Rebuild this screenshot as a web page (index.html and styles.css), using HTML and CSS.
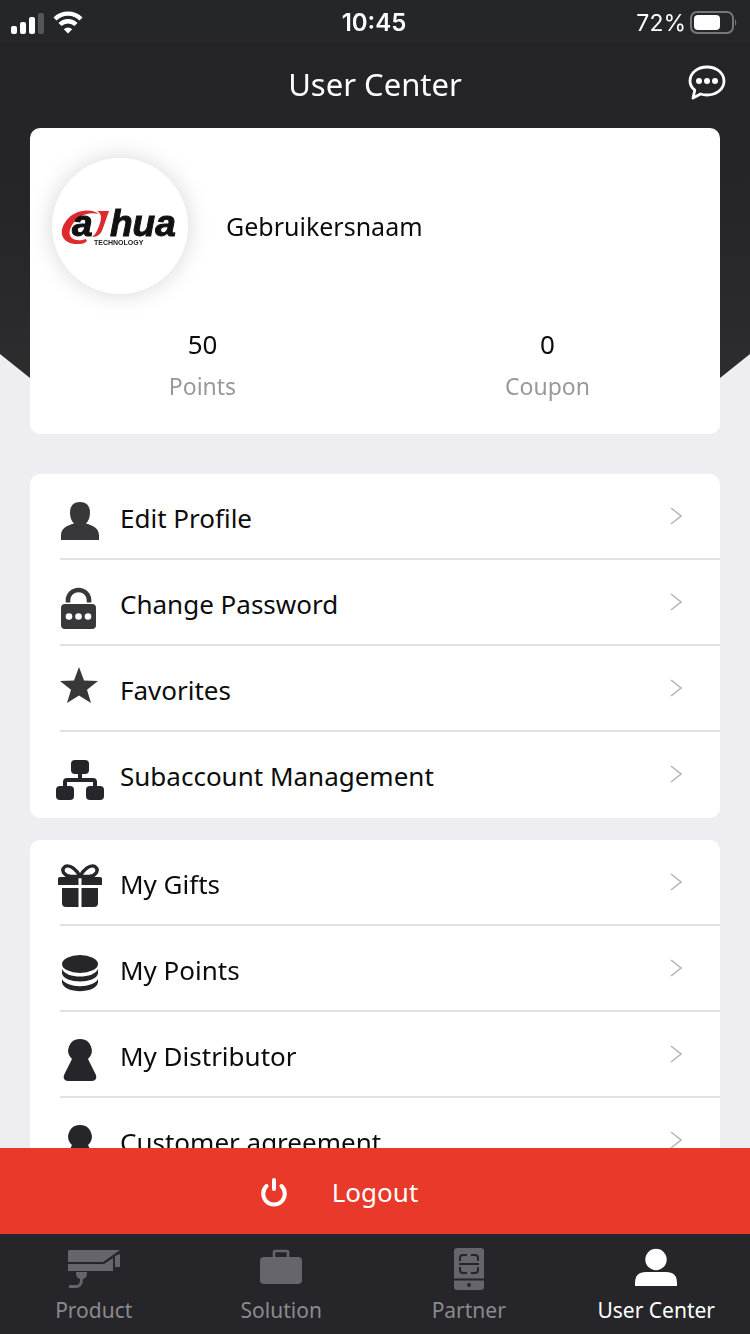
FILE: index.html
```html
<!DOCTYPE html>
<html lang="en">
<head>
<meta charset="utf-8">
<meta name="viewport" content="width=device-width, initial-scale=1">
<title>User Center</title>
<link rel="stylesheet" href="styles.css">
</head>
<body>
<svg class="defs" aria-hidden="true">
  <symbol id="chevron" viewBox="0 0 12 18"><path d="M1 1l10 8-10 8" fill="none" stroke="#b4b4b6" stroke-width="1.5"/></symbol>
  <symbol id="pawn" viewBox="0 0 48 48"><path d="M24 4a11.500 11.500 0 0 1 8 20l7.500 15c2 4 0 7-3.500 7H12c-3.500 0-5.500-3-3.500-7L16 24A11.500 11.500 0 0 1 24 4z"/></symbol>
</svg>
<div class="app">
  <main class="content">
    <svg class="backdrop" viewBox="0 0 750 434" preserveAspectRatio="none" aria-hidden="true">
      <defs><linearGradient id="dark" x1="0" y1="0" x2="0" y2="1"><stop offset="0" stop-color="#242428"/><stop offset=".5" stop-color="#262529"/><stop offset="1" stop-color="#2f2f2f"/></linearGradient></defs>
      <path fill="url(#dark)" d="M0 0H750V354L720 378Q640 430 375 430Q110 430 30 378L0 354Z"/>
    </svg>
    <div class="status">
      <div class="status-side">
        <svg width="34" height="24" viewBox="0 0 34 24" fill="#fff" aria-label="Signal"><rect x="1" y="15" width="6" height="8" rx="2"/><rect x="10" y="11" width="6" height="12" rx="2"/><rect x="19" y="6" width="6" height="17" rx="2"/><rect x="28" y="2" width="6" height="21" rx="2" fill="#56565a"/></svg>
        <svg width="30" height="24" viewBox="0 0 30 24" fill="none" stroke="#fff" stroke-width="4.400" aria-label="Wi-Fi"><path d="M2 8a18.500 18.500 0 0 1 26 0"/><path d="M7 13.500a11.500 11.500 0 0 1 16 0"/><path d="M15 22.500l-4.200-4.300a6 6 0 0 1 8.400 0z" fill="#fff" stroke="none"/></svg>
      </div>
      <time class="clock">10:45</time>
      <div class="status-side status-end">
        <span>72%</span>
        <svg width="48" height="24" viewBox="0 0 48 24" aria-label="Battery"><rect x="1" y="1" width="42" height="21" rx="6" fill="none" stroke="#77777a" stroke-width="2"/><rect x="4" y="4" width="26" height="15" rx="4" fill="#fff"/><path d="M45 8q2.500 3.500 0 7z" fill="#77777a"/></svg>
      </div>
    </div>
    <header class="header">
      <h1>User Center</h1>
      <button class="chat" aria-label="Messages">
        <svg width="38" height="36" viewBox="0 0 38 36"><path d="M19 2c9.600 0 17 6 17 14s-7.400 14-17 14c-2.300 0-4.500-.3-6.500-1L5 33l1.800-7.800C3.800 22.800 2 19.600 2 16 2 8 9.400 2 19 2z" fill="none" stroke="#fff" stroke-width="2.800" stroke-linejoin="round"/><g fill="#fff"><circle cx="11" cy="16" r="3"/><circle cx="19" cy="16" r="3"/><circle cx="27" cy="16" r="3"/></g></svg>
      </button>
    </header>
    <section class="card profile">
      <div class="identity">
        <div class="avatar">
          <svg width="118" height="44" viewBox="0 0 118 44" role="img" aria-label="Dahua Technology">
            <path d="M38 10C28 3 12 7 5 17c-9 12-3 24 13 23 4 0 6-1 8-3l-1-2c-12 4-20-2-15-12C15 12 27 7 38 10z" fill="#dc2a2e"/>
            <path d="M36 7h12l-6 17c-2 6-5 9-11 9 4-3 5-6 7-11 3-8 3-12-2-15z" fill="#dc2a2e"/>
            <text class="logo-name" x="11" y="32">a</text>
            <text class="logo-name" x="49" y="32">hua</text>
            <text class="logo-sub" x="33" y="41">TECHNOLOGY</text>
          </svg>
        </div>
        <p class="name">Gebruikersnaam</p>
      </div>
      <dl class="stats">
        <div><dd>50</dd><dt>Points</dt></div>
        <div><dd>0</dd><dt>Coupon</dt></div>
      </dl>
    </section>
    <nav class="card menu">
      <a class="row" href="#profile"><svg class="icon soft" viewBox="0 0 48 48"><path d="M24 5c6.500 0 10 4 10 10.500 0 5-1.500 8.500-4 11 7 2 13 4.500 13 12V43H5v-4.500c0-7.500 6-10 13-12-2.500-2.500-4-6-4-11C14 9 17.500 5 24 5z"/></svg><span>Edit Profile</span><svg class="chevron"><use href="#chevron"/></svg></a>
      <a class="row" href="#password"><svg class="icon soft" viewBox="0 0 48 48"><path d="M12 19.500V17a10.500 10 0 0 1 21 0v2.500" fill="none" stroke="#38383a" stroke-width="4.600"/><rect x="5" y="21" width="35" height="25" rx="4"/><g fill="#fff"><circle cx="13" cy="33.500" r="3.300"/><circle cx="22.500" cy="33.500" r="3.300"/><circle cx="32" cy="33.500" r="3.300"/></g></svg><span>Change Password</span><svg class="chevron"><use href="#chevron"/></svg></a>
      <a class="row" href="#favorites"><svg class="icon soft star" viewBox="0 0 48 48"><path d="M23-2l5 13.400 14 .6-11 8.700L35 34l-12-7.500L11 34l4-13.300L4 12l14-.6z"/></svg><span>Favorites</span><svg class="chevron"><use href="#chevron"/></svg></a>
      <a class="row" href="#subaccounts"><svg class="icon" viewBox="0 0 48 48"><rect x="15" y="5" width="18" height="14" rx="4"/><rect x="0" y="31" width="18" height="14" rx="4"/><rect x="30" y="31" width="18" height="14" rx="4"/><path d="M24 18v7M9 32v-5q0-2 2-2h26q2 0 2 2v5" fill="none" stroke="#25252a" stroke-width="4"/></svg><span>Subaccount Management</span><svg class="chevron"><use href="#chevron"/></svg></a>
    </nav>
    <nav class="card menu">
      <a class="row" href="#gifts"><svg class="icon" viewBox="0 0 48 48"><path d="M4 14h18.500v8H2v-6q0-2 2-2zM25.500 14H44q2 0 2 2v6H25.500zM6 25h16.500v19H10q-4 0-4-4zM25.500 25H42v15q0 4-4 4H25.500z"/><path d="M24 13.500C21 7 14 1 9 3.500c-5 4 0 10 6 10zM24 13.500C27 7 34 1 39 3.500c5 4 0 10-6 10z" fill="none" stroke="#25252a" stroke-width="3.400"/></svg><span>My Gifts</span><svg class="chevron"><use href="#chevron"/></svg></a>
      <a class="row" href="#points"><svg class="icon" viewBox="0 0 48 48"><ellipse cx="24" cy="15" rx="18" ry="9"/><path d="M6 20c4 10 32 10 36 0v4.500c-2 10.500-34 10.500-36 0zM6 30c4 9.500 32 9.500 36 0v3.500c-2 11.500-34 11.500-36 0z"/></svg><span>My Points</span><svg class="chevron"><use href="#chevron"/></svg></a>
      <a class="row" href="#distributor"><svg class="icon"><use href="#pawn"/></svg><span>My Distributor</span><svg class="chevron"><use href="#chevron"/></svg></a>
      <a class="row" href="#agreement"><svg class="icon"><use href="#pawn"/></svg><span>Customer agreement</span><svg class="chevron"><use href="#chevron"/></svg></a>
    </nav>
  </main>
  <button class="logout">
    <svg width="28" height="30" viewBox="0 0 28 30" fill="none" stroke="#fff" stroke-width="4" stroke-linecap="round"><path d="M6.500 9a10.800 10.800 0 1 0 15 0M14 3v9"/></svg>
    <span>Logout</span>
  </button>
  <nav class="tabs">
    <a class="tab" href="#product"><svg viewBox="0 0 56 44"><path d="M3 3h51l-17 12H2V4zM2 17h36l9-6v13H2z"/><path d="M49 9l5-2v13h-5zM10 25h11c0 5-1 6-4 7 0 6-3 9-7 9H3v-3h7c3 0 4-2 4-6-3-1-4-3-4-7z"/></svg><span>Product</span></a>
    <a class="tab" href="#solution"><svg viewBox="0 0 56 44"><rect x="7" y="10" width="42" height="27" rx="4"/><path d="M21 11V5q0-1 1-1h12q1 0 1 1v6" fill="none" stroke="#66656b" stroke-width="2.600"/></svg><span>Solution</span></a>
    <a class="tab" href="#partner"><svg viewBox="0 0 56 44"><rect x="13" y="1" width="30" height="42" rx="3"/><path d="M13 32.500h30" stroke="#26252a" stroke-width="2"/><path d="M18 17h20M19 14v-3q0-3 3-3h4M30 8h4q3 0 3 3v3M19 20v3q0 3 3 3h4M30 26h4q3 0 3-3v-3" fill="none" stroke="#26252a" stroke-width="2"/><circle cx="28" cy="38" r="2" fill="#26252a"/></svg><span>Partner</span></a>
    <a class="tab active" href="#user" aria-current="page"><svg viewBox="0 0 56 44"><circle cx="28" cy="12.500" r="10.700"/><path d="M7 39v-3q0-11 11-11h20q11 0 11 11v3z"/></svg><span>User Center</span></a>
  </nav>
</div>
</body>
</html>
```

FILE: styles.css
```css
* {
  box-sizing: border-box;
}

body,
h1,
p,
dl,
dd {
  margin: 0;
}

body {
  background: #eeedf2;
  color: #0c0c0c;
  font-family: "Noto Sans", "Open Sans", sans-serif;
  font-size: 26px;
  line-height: 36px;
}

a {
  color: inherit;
  text-decoration: none;
}

button {
  border: 0;
  padding: 0;
  background: none;
  color: #fff;
  font: inherit;
  cursor: pointer;
}

svg {
  display: block;
  flex: none;
}

.defs {
  display: none;
}

.app {
  display: flex;
  flex-direction: column;
  height: 100vh;
}

.content {
  position: relative;
  flex: 1;
  min-height: 0;
  overflow-y: auto;
  scrollbar-width: none;
}

.backdrop {
  position: absolute;
  top: 0;
  left: 0;
  z-index: -1;
  width: 100%;
  height: 434px;
}

.status {
  display: grid;
  grid-template-columns: 1fr auto 1fr;
  align-items: center;
  height: 42px;
  padding: 4px 12px 0 10px;
  background: #242629;
  color: #fff;
  font-family: Inter, sans-serif;
  font-size: 23px;
  line-height: 30px;
}

.status-side {
  display: flex;
  align-items: center;
  gap: 9px;
}

.status-end {
  justify-content: flex-end;
  gap: 4px;
}

.clock {
  font-size: 24px;
  font-weight: 600;
}

.header {
  display: grid;
  grid-template-columns: 1fr auto 1fr;
  align-items: center;
  height: 86px;
  padding: 0 24px 4px;
  color: #fff;
}

.header h1 {
  grid-column: 2;
  padding-top: 2px;
  font-size: 31px;
  font-weight: 400;
}

.chat {
  justify-self: end;
}

.card {
  margin: 0 30px;
  border-radius: 10px;
  background: #fff;
}

.profile {
  padding: 30px 0 30px;
}

.identity {
  display: flex;
  align-items: center;
  gap: 38px;
  padding-left: 22px;
}

.avatar {
  display: flex;
  align-items: center;
  justify-content: center;
  width: 136px;
  height: 136px;
  border-radius: 50%;
  background: #fff;
  box-shadow: 0 0 24px rgba(0, 0, 0, 0.16);
}

.avatar svg {
  overflow: visible;
}

.logo-name {
  fill: #111;
  stroke: #111;
  stroke-width: 1px;
  font-family: "Liberation Sans", sans-serif;
  font-size: 37px;
  font-style: italic;
  font-weight: 700;
}

.logo-sub {
  fill: #222;
  font-family: "Liberation Sans", sans-serif;
  font-size: 7px;
  font-weight: 700;
}

.name {
  font-size: 25px;
}

.stats {
  display: grid;
  grid-template-columns: 1fr 1fr;
  padding-top: 32px;
  text-align: center;
}

.stats div {
  display: flex;
  flex-direction: column;
  gap: 6px;
}

.stats dt {
  color: #999;
  font-size: 23px;
}

.menu {
  margin-top: 22px;
  padding-left: 30px;
}

.profile + .menu {
  margin-top: 40px;
}

.row {
  display: flex;
  align-items: center;
  height: 86px;
  padding: 4px 38px 0 0;
  border-bottom: 2px solid #e2e2e4;
}

.row:last-child {
  border-bottom-color: transparent;
}

.row span {
  flex: 1;
}

.icon {
  width: 48px;
  height: 48px;
  margin: 6px 16px 0 -4px;
  fill: #25252a;
}

.icon.soft {
  fill: #38383a;
}

.icon.star {
  overflow: visible;
}

.chevron {
  width: 12px;
  height: 18px;
  margin-bottom: 4px;
}

.logout {
  display: flex;
  align-items: center;
  justify-content: center;
  gap: 44px;
  height: 86px;
  padding: 2px 72px 0 0;
  background: #e8392b;
}

.tabs {
  display: grid;
  grid-template-columns: repeat(4, 1fr);
  height: 100px;
  background: #26252a;
  color: #8b8a8f;
  font-size: 21px;
  line-height: 30px;
}

.tab {
  display: flex;
  flex-direction: column;
  align-items: center;
  gap: 4px;
  padding-top: 13px;
  fill: #66656b;
}

.tab svg {
  width: 56px;
  height: 44px;
}

.tab.active {
  color: #fff;
  fill: #fff;
}
```
